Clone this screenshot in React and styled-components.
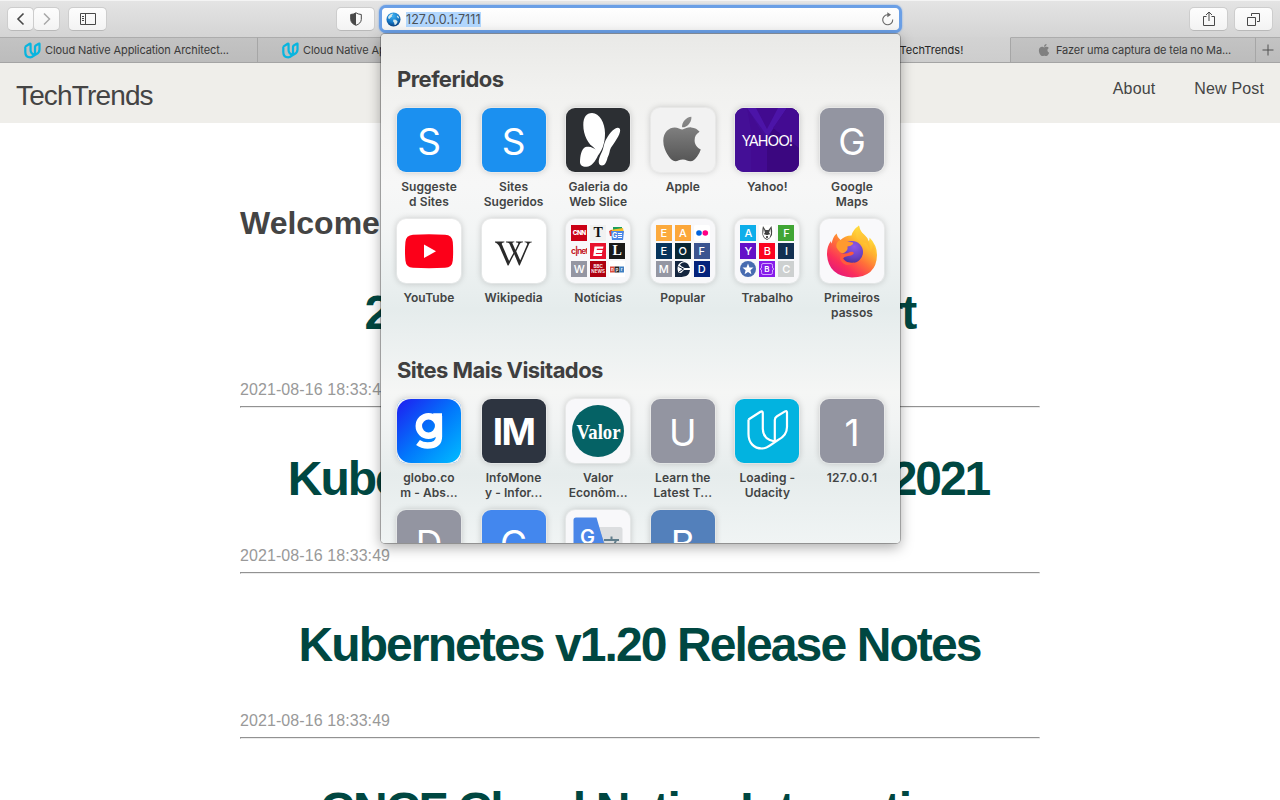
import React from 'react';
import styled, { createGlobalStyle } from 'styled-components';
import { FaApple, FaWikipediaW } from 'react-icons/fa';

const ui = "Inter, 'Liberation Sans', sans-serif";
const helvetica = "'Liberation Sans', Arial, sans-serif";

const GlobalStyle = createGlobalStyle`
  * { box-sizing: border-box; }
  html, body { margin: 0; height: 100%; overflow: hidden; background: #fff; }
`;

const Window = styled.div`
  position: relative;
  width: 1280px;
  height: 800px;
  overflow: hidden;
  display: flex;
  flex-direction: column;
  font-family: ${ui};
`;

/* Browser chrome */
const Toolbar = styled.div`
  flex: none;
  height: 37px;
  display: flex;
  align-items: flex-start;
  padding: 6px 7px 0;
  border-top: 1px solid #f4f4f4;
  background: linear-gradient(#e4e4e4, #d4d4d4);
`;

const ToolButton = styled.div`
  flex: none;
  width: ${(p) => p.$w}px;
  height: 24px;
  margin-left: ${(p) => p.$ml || 0}px;
  display: flex;
  align-items: center;
  justify-content: center;
  border: 1px solid #cdcdcd;
  border-bottom-color: #b9b9b9;
  border-radius: 5px;
  background: linear-gradient(#fdfdfd, #f3f3f3);
  color: ${(p) => (p.$dim ? '#a8a8a8' : '#484848')};
`;

const AddressBar = styled.div`
  flex: none;
  width: 517px;
  height: 22px;
  margin: 1px 0 0 7px;
  padding: 0 5px 0 4px;
  display: flex;
  align-items: center;
  border-radius: 4px;
  background: linear-gradient(#fff, #f5f5f5);
  box-shadow: 0 0 0 3px #6a9fe6, 0 0 2px 3px #6a9fe6;
`;

const Url = styled.span`
  margin-left: 5px;
  height: 15px;
  line-height: 15px;
  font-size: 12.5px;
  letter-spacing: ${(p) => p.$ls}px;
  background: #b2d7fe;
  color: #4b5157;
`;

const Spacer = styled.div`
  flex: 1;
`;

const TabBar = styled.div`
  flex: none;
  height: 26px;
  display: flex;
  border-bottom: 1px solid #a4a4a4;
  background: linear-gradient(#d3d3d3, #cdcdcd);
`;

const Tab = styled.div`
  flex: none;
  width: ${(p) => p.$w}px;
  display: flex;
  align-items: center;
  padding-left: ${(p) => p.$pl}px;
  border-top: 1px solid ${(p) => (p.$active ? 'transparent' : '#acacac')};
  border-right: 1px solid #a6a6a6;
  background: ${(p) => (p.$active ? 'none' : 'linear-gradient(#c3c3c3, #bcbcbc)')};
  color: ${(p) => (p.$active ? '#262626' : '#3a3a3a')};
  font-size: 11px;
  letter-spacing: ${(p) => p.$ls || 0}px;
  white-space: nowrap;
  svg { flex: none; }
`;

const TabText = styled.span`
  margin-left: ${(p) => p.$ml}px;
`;

/* Page */
const SiteHeader = styled.header`
  flex: none;
  height: 60px;
  display: flex;
  justify-content: space-between;
  padding: 0 16px;
  background: #efeeea;
  color: #444;
  font-family: ${helvetica};
`;

const Brand = styled.div`
  font-size: 28px;
  line-height: 66px;
  letter-spacing: -0.85px;
`;

const Nav = styled.nav`
  display: flex;
  gap: 39px;
  font-size: 16px;
  line-height: 51px;
  letter-spacing: 0.15px;
`;

const Main = styled.main`
  flex: none;
  width: 800px;
  margin: 0 auto;
  padding-top: 77px;
  font-family: ${helvetica};
`;

const Welcome = styled.h2`
  margin: 0 0 41px;
  font-size: 32px;
  line-height: 46px;
  color: #444;
`;

const Post = styled.article`
  height: 165.6px;
`;

const PostTitle = styled.h1`
  margin: 0;
  padding: 1.4px ${(p) => p.$pr || 0}px 0 0;
  text-align: center;
  font-size: 48px;
  line-height: 50px;
  letter-spacing: ${(p) => p.$ls}px;
  color: #004741;
`;

const PostDate = styled.div`
  margin-top: 39.6px;
  font-size: 16px;
  line-height: 24px;
  letter-spacing: 0.08px;
  color: #999;
`;

const Rule = styled.hr`
  margin: 4px 0 0;
  border: 1px solid;
  border-color: #929292 #ececec #ececec #929292;
`;

/* Favourites popover */
const Popover = styled.section`
  position: absolute;
  left: 381px;
  top: 34px;
  width: 519px;
  height: 509px;
  overflow: hidden;
  padding: 31px 16px 0;
  border-radius: 4px;
  background: linear-gradient(#e9e9e7 0, #f1f1ef 55px, #f7f7f7 150px, #f3f5f5 195px, #e5ecec 275px,
    #eaefef 300px, #f5f6f5 358px, #f2f4f4 385px, #e6ecec 440px, #f0f4f4 509px);
`;

const PopoverShadow = styled.div`
  position: absolute;
  left: 381px;
  top: 34px;
  width: 519px;
  height: 509px;
  border-radius: 4px;
  box-shadow: 0 0 0 1px rgba(0, 0, 0, 0.25), 0 4px 14px rgba(0, 0, 0, 0.35);
`;

const SectionTitle = styled.h3`
  margin: 0;
  height: 28px;
  line-height: 28px;
  font-size: 22px;
  font-weight: 700;
  letter-spacing: ${(p) => p.$ls}px;
  color: #3f3f3f;
`;

const Grid = styled.div`
  display: grid;
  grid-template-columns: repeat(6, 64px);
  column-gap: 20.6px;
  grid-auto-rows: 111px;
  margin: 15px 0 ${(p) => p.$mb || 0}px;
`;

const Site = styled.div`
  display: flex;
  flex-direction: column;
  align-items: center;
`;

const Tile = styled.div`
  flex: none;
  width: 64px;
  height: 64px;
  overflow: hidden;
  display: flex;
  align-items: center;
  justify-content: center;
  border-radius: 9px;
  background: ${(p) => p.$bg};
  box-shadow: 0 0 0 1px rgba(255, 255, 255, 0.35), 0 0 7px rgba(0, 0, 0, 0.22);
  svg { display: block; flex: none; }
`;

const Letter = styled.span`
  padding-top: 4px;
  font-size: 37px;
  font-weight: 400;
  line-height: 60px;
  color: #fff;
`;

const Caption = styled.div`
  margin-top: 7px;
  text-align: center;
  white-space: nowrap;
  font-size: 12px;
  line-height: 15px;
  font-weight: 600;
  color: #424444;
`;

const Line = styled.div`
  letter-spacing: ${(p) => p.$ls ?? 0.07}px;
`;

const MiniGrid = styled.div`
  display: grid;
  grid-template-columns: repeat(3, 16px);
  grid-auto-rows: 16px;
  gap: 2px 3px;
`;

const Mini = styled.div`
  display: flex;
  align-items: center;
  justify-content: center;
  overflow: hidden;
  background: ${(p) => p.$bg};
  color: ${(p) => p.$fg || '#fff'};
  font-family: ${(p) => p.$font || ui};
  font-size: ${(p) => p.$size || 11}px;
  font-weight: ${(p) => p.$weight || 500};
  line-height: ${(p) => p.$lh || 16}px;
  letter-spacing: ${(p) => p.$ls || 0}px;
  text-align: center;
  white-space: pre;
`;

const UdacityMark = ({ size, stroke, color, ...rest }) => (
  <svg width={size} height={size} fill="none" stroke={color} strokeWidth={stroke} strokeLinejoin="round" {...rest}>
    <path d="M13.500 20.500 25.500 12.800Q27.800 11.500 27.800 14V30Q28 40.500 39.800 42.500M13.500 20.500V35C13.500 44 19 49.500 27 49.500 33 49.500 36 45 43 41 49 38 52 34 52 28V13.500q0-2.200-2-1.100l-8 4.900q-2.200 1.300-2.200 3.700v21.500" />
  </svg>
);

const Globe = () => (
  <svg width="15" height="15" viewBox="0 0 15 15">
    <defs>
      <radialGradient id="sea" cx="45%" cy="25%" r="75%">
        <stop offset="0" stopColor="#3fb3f2" />
        <stop offset=".6" stopColor="#1678c6" />
        <stop offset="1" stopColor="#0b3f7d" />
      </radialGradient>
    </defs>
    <circle cx="7.500" cy="7.500" r="7" fill="url(#sea)" />
    <path d="M2 5Q3.500 2.300 6.500 1.600l.4 1-1.200.6.500 1-1.500 1.300-1 1.200-1 .2zM7.500 7.500l2.400.3 1.700 1.700-.6 1.700-1.700 1.900-.8-.4-.4-2-1.100-1.400zM11 3.400l1.700 1.400.5 1.800-1.200-.5-1.100-1.300z" fill="#d5e8ea" />
  </svg>
);

const Butterfly = () => (
  <svg width="64" height="64" fill="#fff">
    <path d="M17.300 17C17.300 9 20.500 5 26 5c7.500 0 13 10 13 20 0 4-.3 7-1.200 10.500C36.500 41 34.500 44 32 47.500c-2.800 6-6.500 11-11.400 11.200-4.200.2-6.800-1.700-6.600-5C14.200 48.500 15 41 19.500 39c3-1.200 6.500-.5 10 2.500C22 36 17.300 27 17.300 17z" />
    <path d="M49 20.800c3-2 6-.8 5 3-1 4-2.500 6-5 10C47 37 45 39 44 42c-.5 3-1.200 5-2.400 7.500-1.200 4.500-2.600 8-5.600 8-3.600 0-3.800-4-2.500-8 1-3.500 2.500-5 3.500-8.500 1.200-4.500 1.600-8 4.500-12 2-3.500 4.500-6.500 7.500-8.200z" />
    <path d="M20.500 38.300q5.500.3 9.300 3.500-2.500-3-5.300-4.800z" fill="#2c2f33" />
  </svg>
);

const SvgLabel = styled.text`
  font-family: ${(p) => p.$font};
  font-weight: ${(p) => p.$weight || 400};
  font-size: ${(p) => p.$size}px;
  letter-spacing: ${(p) => p.$ls || 0}px;
  fill: ${(p) => p.$fill || '#fff'};
  text-anchor: middle;
`;

const Yahoo = () => (
  <svg width="64" height="64">
    <path d="M0 0h14l18 28v36H0z" fill="#440f96" />
    <path d="M12 0h9l11 21L43 0h9L34 34v30h-2V28z" fill="#4c14a8" />
    <path d="M52 0h12v64H32V30z" fill="#3b0780" />
    <path d="M12 0 32 33v31H16V22zM64 40 38 20l14-20h12z" fill="#430b92" />
    <SvgLabel $font="Lato, sans-serif" $size={15.5} $ls={-0.8} x="32" y="37.500" textLength="50" lengthAdjust="spacingAndGlyphs">YAHOO!</SvgLabel>
  </svg>
);

const YouTube = () => (
  <svg width="64" height="64">
    <path d="M16 15.700q16-1 32 0 7.300.4 7.800 7.300.7 9.500 0 18.500-.5 7-7.800 7.300-16 .9-32 0-7-.4-7.600-7.300-.8-9 0-18.500.5-6.800 7.600-7.300z" fill="#fc0019" />
    <path d="M27 25.500v13.600l12-6.800z" fill="#fff" />
  </svg>
);

const Firefox = () => (
  <svg width="64" height="64">
    <defs>
      <linearGradient id="fox" x1=".85" y1=".05" x2=".2" y2=".95">
        <stop offset="0" stopColor="#fff14a" />
        <stop offset=".3" stopColor="#ffbc2e" />
        <stop offset=".55" stopColor="#ff7139" />
        <stop offset=".8" stopColor="#fb2f5a" />
        <stop offset="1" stopColor="#e5197a" />
      </linearGradient>
      <radialGradient id="orb" cx=".6" cy=".25" r=".8">
        <stop offset="0" stopColor="#9059e8" />
        <stop offset=".6" stopColor="#6a43c5" />
        <stop offset="1" stopColor="#4d3096" />
      </radialGradient>
      <linearGradient id="tail" x1="0" y1="0" x2=".4" y2="1">
        <stop offset="0" stopColor="#ffdc3e" />
        <stop offset="1" stopColor="#ff8a27" stopOpacity="0" />
      </linearGradient>
    </defs>
    <path d="M16.500 14.500q.8 4 4 6.500 4-4.500 11-4.600 1.500-5.800 7.500-9.900.5 5.500 5.500 9.500 3 2.500 4.200 6.500 1-1.500.8-4 7.500 7.500 7.500 17.500-.4 22-25 22.500Q8.500 57 7 36q-.3-8.500 4-14 .1 1.500.8 2.500.7-6 4.700-10z" fill="url(#fox)" />
    <circle cx="32" cy="33" r="11" fill="url(#orb)" />
    <path d="M39 6.500q.5 5.500 5.500 9.500 7 6 5 18 4-4 3-10 4 7 2.500 14-2 8-8 11 8-13-1-25-5 0-9-5-2-6 2-12.500z" fill="url(#tail)" />
    <path d="M20.500 21q3.500-1.200 5.500 1.500 3 .5 6 .7 2 .4.5 2.300-1 1.500-5 2 1 4.500-5 7-3-1-6-6-1-6 4-7.500z" fill="#ff9a2f" />
    <path d="M21 34q5 1.500 9-1 2.500-1 4 1-1.500 3-6 3-4 .5-5.500 3 4 5 12 3.500Q25 50 20 40z" fill="#ff5a3c" />
  </svg>
);

const Globo = () => (
  <svg width="64" height="64">
    <defs>
      <linearGradient id="globo" x1="0" y1="0" x2="1" y2="1">
        <stop offset="0" stopColor="#1f1cf0" />
        <stop offset=".5" stopColor="#0276fb" />
        <stop offset="1" stopColor="#00bdff" />
      </linearGradient>
    </defs>
    <rect width="64" height="64" fill="#f4f6f8" />
    <rect width="64" height="64" rx="14" fill="url(#globo)" />
    <circle cx="31.500" cy="27" r="9.700" fill="none" stroke="#fff" strokeWidth="6.500" />
    <path d="M36 14.300h9v8h-6z" fill="#fff" />
    <path d="M42 17v20.500q0 9-11.500 9-5.500 0-9.500-3" fill="none" stroke="#fff" strokeWidth="6.300" />
  </svg>
);

const Valor = () => (
  <svg width="64" height="64">
    <circle cx="32" cy="32" r="26" fill="#056265" />
    <SvgLabel $font="'Liberation Serif', serif" $weight={700} $size={21} x="32.500" y="39.500" textLength="44" lengthAdjust="spacingAndGlyphs">Valor</SvgLabel>
  </svg>
);

const Translate = () => (
  <svg width="64" height="64">
    <path d="M28 17h26q2.500 0 2.500 2.500V57H38z" fill="#dcdee0" />
    <path d="M29 8 39 34h-8z" fill="#b4b8bc" />
    <path d="M10 7.500h20.500L40 40H10q-2.500 0-2.500-2.500V10q0-2.500 2.500-2.500z" fill="#4a86e8" />
    <SvgLabel $font={ui} $weight={600} $size={20} x="21.500" y="34">G</SvgLabel>
    <path d="M38 30h15M45.500 26.500V30M50 30q-2 7-8 10" stroke="#607d8b" strokeWidth="2" fill="none" />
  </svg>
);

const Flickr = () => (
  <svg width="16" height="16"><rect width="16" height="16" rx="2" fill="#fff" /><circle cx="5" cy="8" r="2.800" fill="#0063dc" /><circle cx="11.300" cy="8" r="2.800" fill="#ff0084" /></svg>
);
const GoogleNews = () => (
  <svg width="16" height="16">
    <path d="M4 2h9v6H4z" fill="#1b9e5a" /><path d="m1 5 13-2 1 5H1z" fill="#f7bd2a" /><path d="m0 6 3-1v6H1z" fill="#e2453c" />
    <path d="M2 6h13l-1 9H3z" fill="#4a86e8" />
    <SvgLabel $font={ui} $weight={700} $size={7} x="5.700" y="13">G</SvgLabel>
    <path d="M9 8.500h4M9 10.500h4M9 12.500h4" stroke="#fff" strokeWidth="1" />
  </svg>
);
const Espn = () => (
  <svg width="16" height="16"><path d="M4.500 3.500h9l-.5 2.200H7l-.3 1.300h6l-.8 3H6l-.3 1h6.500l-.5 2H3.200z" fill="#fff" /></svg>
);
const Npr = () => (
  <svg width="16" height="16">
    <path d="M1 5.500h4.700v6H1z" fill="#dc4a3a" /><path d="M5.700 5.500h4.600v6H5.700z" fill="#222" /><path d="M10.300 5.500H15v6h-4.700z" fill="#3e7fc1" />
    <SvgLabel $font={ui} $weight={600} $size={4.5} x="3.300" y="10">n</SvgLabel>
    <SvgLabel $font={ui} $weight={600} $size={4.5} x="8" y="9.500">p</SvgLabel>
    <SvgLabel $font={ui} $weight={600} $size={4.5} x="12.700" y="10">r</SvgLabel>
  </svg>
);
const Moon = () => (
  <svg width="16" height="16">
    <path d="M0 0h9Q2 2 2.500 8T9 16H0z" fill="#14263f" />
    <path d="M5 3.500Q9-.5 13 3l2 4H9.500L6 5zM9 9h6q-1 6-6 6.500-4 .3-6-4L6 12z" fill="#14263f" />
    <path d="M3.500 5.500 8.500 8 4 11" fill="none" stroke="#14263f" strokeWidth="1" />
  </svg>
);
const Husky = () => (
  <svg width="16" height="16">
    <path d="m4 1 2.500 4h3L12.500 1q1 5 .5 9l-2 3-3 2-3-2-1.500-3Q3 5 4 1z" fill="#444" />
    <path d="m4.800 3.500 1.200 4.500.8 2h2.400l.8-2 1.500-4.500.5 5L10.500 13 8 14l-2.500-1.500L4 9.500z" fill="#fff" />
    <path d="M6 8v1.500M10 8v1.500M7 12h2" stroke="#222" strokeWidth="1.300" />
  </svg>
);
const Star = () => (
  <svg width="16" height="16"><circle cx="8" cy="8" r="8" fill="#476bb0" /><path d="m8 2.500 1.500 3.900 4 .2-3.100 2.600 1 4L8 11l-3.400 2.200 1-4-3.100-2.600 4-.2z" fill="#fff" /></svg>
);
const Bootstrap = () => (
  <svg width="16" height="16">
    <path d="M4 2.500h8q1.500 0 1.500 2V7L15 8l-1.500 1v2.500q0 2-1.500 2H4q-1.500 0-1.500-2V9L1 8l1.500-1V4.500q0-2 1.500-2z" fill="none" stroke="#d9b4ff" strokeWidth=".9" />
    <SvgLabel $font={ui} $weight={600} $size={8} x="8" y="11">B</SvgLabel>
  </svg>
);

const blackletter = "'Liberation Serif', serif";

const News = () => (
  <MiniGrid>
    <Mini $bg="#cb0016" $size={6.5} $weight={800} $ls={-0.6}>CNN</Mini>
    <Mini $bg="#f1f1f1" $fg="#111" $font={blackletter} $size={14} $weight={700}>T</Mini>
    <Mini><GoogleNews /></Mini>
    <Mini $fg="#c41c2b" $size={8.5} $weight={700} $ls={-1}>c|net</Mini>
    <Mini $bg="#e8112d"><Espn /></Mini>
    <Mini $bg="#191919" $font={blackletter} $size={14} $weight={700}>L</Mini>
    <Mini $bg="#9496a2">W</Mini>
    <Mini $bg="#ae0010" $size={4.5} $lh={5} $weight={600}>{'BBC\nNEWS'}</Mini>
    <Mini $bg="#fff"><Npr /></Mini>
  </MiniGrid>
);

const Popular = () => (
  <MiniGrid>
    <Mini $bg="#fcaa3e">E</Mini>
    <Mini $bg="#fca73a">A</Mini>
    <Mini><Flickr /></Mini>
    <Mini $bg="#06345c">E</Mini>
    <Mini $bg="#082633">O</Mini>
    <Mini $bg="#3b5490">F</Mini>
    <Mini $bg="#9496a2">M</Mini>
    <Mini $bg="#fff"><Moon /></Mini>
    <Mini $bg="#04237c">D</Mini>
  </MiniGrid>
);

const Work = () => (
  <MiniGrid>
    <Mini $bg="#0eaeea">A</Mini>
    <Mini $bg="#fff"><Husky /></Mini>
    <Mini $bg="#40a535">F</Mini>
    <Mini $bg="#6410c8">Y</Mini>
    <Mini $bg="#fb0320">B</Mini>
    <Mini $bg="#122f51">I</Mini>
    <Mini><Star /></Mini>
    <Mini $bg="#861bea"><Bootstrap /></Mini>
    <Mini $bg="#cdd0d0">C</Mini>
  </MiniGrid>
);

const AppleMark = () => (
  <svg width="64" height="64">
    <defs>
      <linearGradient id="steel" x1="0" y1="0" x2="0" y2="1">
        <stop offset="0" stopColor="#8c8c8c" />
        <stop offset="1" stopColor="#565656" />
      </linearGradient>
    </defs>
    <FaApple x="5.500" y="5.500" size={51} style={{ fill: 'url(#steel)' }} />
  </svg>
);

const WikiMark = styled(FaWikipediaW)`
  width: 37px;
  height: 37px;
  margin-top: 4px;
  color: #2a2a2a;
`;

const favourites = [
  { bg: '#1b90f0', art: <Letter>S</Letter>, lines: ['Suggeste', 'd Sites'] },
  { bg: '#1b90f0', art: <Letter>S</Letter>, lines: ['Sites', 'Sugeridos'] },
  { bg: '#2c2f33', art: <Butterfly />, lines: ['Galeria do', 'Web Slice'] },
  { bg: '#f2f2f2', art: <AppleMark />, lines: ['Apple'] },
  { bg: '#420a90', art: <Yahoo />, lines: ['Yahoo!'] },
  { bg: '#9395a1', art: <Letter>G</Letter>, lines: ['Google', 'Maps'] },
  { bg: '#fff', art: <YouTube />, lines: ['YouTube'] },
  { bg: '#fff', art: <WikiMark />, lines: ['Wikipedia'] },
  { bg: '#f8f8fa', art: <News />, lines: ['Notícias'] },
  { bg: '#f8f8fa', art: <Popular />, lines: ['Popular'] },
  { bg: '#f8f8fa', art: <Work />, lines: ['Trabalho'] },
  { bg: '#f9f9fb', art: <Firefox />, lines: ['Primeiros', 'passos'] },
];

const Money = styled.span`
  font-size: 37px;
  font-weight: 700;
  letter-spacing: -1.5px;
  color: #fff;
`;

const visited = [
  { bg: '#0276fb', art: <Globo />, lines: ['globo.co', 'm - Abs...'] },
  { bg: '#2d3440', art: <Money>IM</Money>, lines: ['InfoMone', 'y - Infor...'] },
  { bg: '#f8f8fa', art: <Valor />, lines: ['Valor', 'Econôm...'] },
  { bg: '#9395a1', art: <Letter>U</Letter>, lines: ['Learn the', 'Latest T...'] },
  { bg: '#02b3e0', art: <UdacityMark size={64} stroke={2.2} color="#fff" />, lines: ['Loading -', 'Udacity'] },
  { bg: '#9395a1', art: <Letter>1</Letter>, lines: ['127.0.0.1'], ls: 0.3 },
  { bg: '#9395a1', art: <Letter>D</Letter>, lines: [] },
  { bg: '#4387ee', art: <Letter>C</Letter>, lines: [] },
  { bg: '#f8f8fa', art: <Translate />, lines: [] },
  { bg: '#5380bb', art: <Letter>B</Letter>, lines: [] },
];

const SiteGrid = ({ items, mb }) => (
  <Grid $mb={mb}>
    {items.map((s, i) => (
      <Site key={i}>
        <Tile $bg={s.bg}>{s.art}</Tile>
        <Caption>
          {s.lines.map((l) => <Line key={l} $ls={s.ls}>{l}</Line>)}
        </Caption>
      </Site>
    ))}
  </Grid>
);

const posts = [
  { title: '2020 CNCF Annual Report', ls: -1.95, pr: 0 },
  { title: 'KubeCon + CloudNativeCon 2021', ls: -2.07, pr: 3 },
  { title: 'Kubernetes v1.20 Release Notes', ls: -1.9, pr: 1 },
  { title: 'CNCF Cloud Native Interactive Landscape', ls: -1.85, pr: 0 },
];

const Favicon = () => <UdacityMark size={17} viewBox="10 9 46 44" stroke={6} color="#08b5df" />;

export default function App() {
  return (
    <Window>
      <GlobalStyle />
      <Toolbar>
        <ToolButton $w={27}>
          <svg width="10" height="14" fill="none" stroke="currentColor" strokeWidth="1.600"><path d="M7.500 1.500 2 7l5.500 5.500" /></svg>
        </ToolButton>
        <ToolButton $w={27} $dim $ml={-1}>
          <svg width="10" height="14" fill="none" stroke="currentColor" strokeWidth="1.500"><path d="M2 1.500 7.500 7 2 12.500" /></svg>
        </ToolButton>
        <ToolButton $w={39} $ml={8}>
          <svg width="16" height="12" fill="none" stroke="currentColor"><path d="M.5.5h15v11H.5zM5.500.5v11M2 3.500h2M2 5.500h2M2 7.500h2" /></svg>
        </ToolButton>
        <ToolButton $w={39} $ml={229}>
          <svg width="12" height="14"><path d="M6 .8Q8 2.300 11.300 2.500v5Q11 11.500 6 13.300 1 11.500.7 7.500v-5Q4 2.300 6 .8z" fill="none" stroke="#484848" /><path d="M6 .8v12.500Q1 11.500.7 7.500v-5Q4 2.300 6 .8z" fill="#484848" /></svg>
        </ToolButton>
        <AddressBar>
          <Globe />
          <Url $ls={0.08}>127.0.0.1:7111</Url>
          <Spacer />
          <svg width="13" height="14" fill="none" stroke="#6a6a6a" strokeWidth="1.100"><path d="M7.500 2.800H6.300A5 5 0 1 0 11.700 7.500" /><path d="m6.300.3 3.800 2.500-3.800 2.500z" fill="#6a6a6a" stroke="none" /></svg>
        </AddressBar>
        <Spacer />
        <ToolButton $w={39}>
          <svg width="12" height="16" fill="none" stroke="currentColor"><path d="M3.500 5.500h-3v9h11v-9h-3M6 10V1.200M3 4l3-3 3 3" /></svg>
        </ToolButton>
        <ToolButton $w={39} $ml={6}>
          <svg width="13" height="13" fill="none" stroke="currentColor"><path d="M.5 4.500h8v8h-8zM4.500 3V.5h8v8H10" /></svg>
        </ToolButton>
      </Toolbar>
      <TabBar>
        <Tab $w={258} $pl={24} $ls={-0.1}><Favicon /><TabText $ml={4}>Cloud Native Application Architect...</TabText></Tab>
        <Tab $w={251} $pl={24} $ls={-0.1}><Favicon /><TabText $ml={4}>Cloud Native Application Architect...</TabText></Tab>
        <Tab $w={251} $pl={24} />
        <Tab $w={251} $pl={75} $active><TabText $ml={0}>Welcome to TechTrends!</TabText></Tab>
        <Tab $w={245} $pl={26} $ls={-0.15}><FaApple size={14} color="#808080" /><TabText $ml={5}>Fazer uma captura de tela no Ma...</TabText></Tab>
        <Tab $w={25} $pl={6}>
          <svg width="12" height="12" stroke="#505050"><path d="M6 .5v11M.5 6h11" /></svg>
        </Tab>
      </TabBar>
      <SiteHeader>
        <Brand>TechTrends</Brand>
        <Nav><span>About</span><span>New Post</span></Nav>
      </SiteHeader>
      <Main>
        <Welcome>Welcome to TechTrends!</Welcome>
        {posts.map((post) => (
          <Post key={post.title}>
            <PostTitle $ls={post.ls} $pr={post.pr}>{post.title}</PostTitle>
            <PostDate>2021-08-16 18:33:49</PostDate>
            <Rule />
          </Post>
        ))}
      </Main>
      <PopoverShadow />
      <Popover>
        <SectionTitle $ls={-0.55}>Preferidos</SectionTitle>
        <SiteGrid items={favourites} mb={26} />
        <SectionTitle $ls={-0.55}>Sites Mais Visitados</SectionTitle>
        <SiteGrid items={visited} />
      </Popover>
    </Window>
  );
}
